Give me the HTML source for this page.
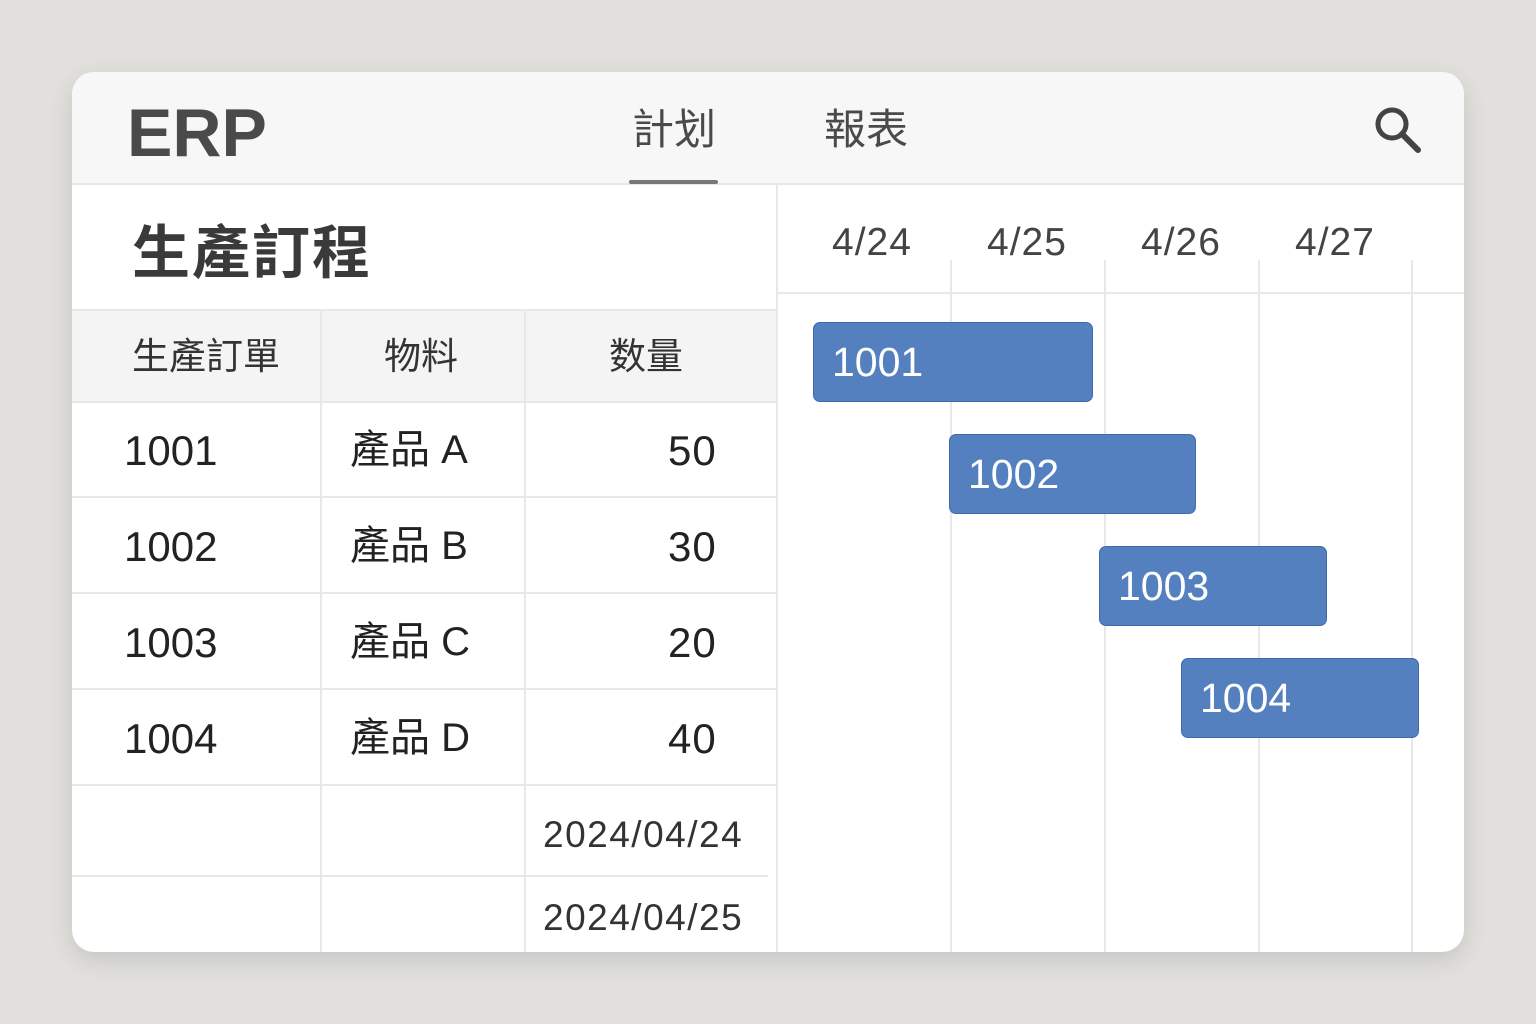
<!DOCTYPE html>
<html><head><meta charset="utf-8"><style>
*{margin:0;padding:0;box-sizing:border-box}
body{width:1536px;height:1024px;background:#e1e0dd;position:relative;overflow:hidden;font-family:"Liberation Sans","Noto Sans CJK TC",sans-serif;color:#222}
.card{position:absolute;left:72px;top:72px;width:1392px;height:880px;background:#fff;border-radius:22px;overflow:hidden;box-shadow:0 8px 24px rgba(0,0,0,.12)}
.a{position:absolute}
.hl{position:absolute;background:#e8e8e8;height:2px}
.vl{position:absolute;background:#e8e8e8;width:2px}
.t{position:absolute;white-space:nowrap;line-height:1}
.bar{position:absolute;background:#5580bf;border-radius:7px;border:1px solid #3f6aab;color:#fff;font-size:41px;padding-left:18px;display:flex;align-items:center}
.d{font-size:39px;color:#444;letter-spacing:1px}
</style></head><body>
<div class="card">
<div class="a" style="left:0;top:0;width:1392px;height:113px;background:#f7f7f7;border-bottom:2px solid #e8e8e8"></div>
<div class="t" style="left:55px;top:27px;font-size:68px;font-weight:bold;color:#4a4a4a">ERP</div>
<div class="t" style="left:560px;top:37px;font-size:42px;color:#4a4a4a">計划</div>
<div class="a" style="left:557px;top:108px;width:89px;height:4px;background:#777;border-radius:2px"></div>
<div class="t" style="left:752px;top:37px;font-size:42px;color:#4a4a4a">報表</div>
<svg class="a" style="left:1298px;top:30px" width="54" height="54" viewBox="0 0 54 54"><circle cx="22" cy="22" r="14" fill="none" stroke="#444" stroke-width="5"/><line x1="32" y1="32" x2="48" y2="48" stroke="#444" stroke-width="6" stroke-linecap="round"/></svg>
<div class="vl" style="left:704px;top:113px;height:767px"></div>
<div class="t" style="left:60px;top:153px;font-size:58px;font-weight:bold;color:#3a3a3a;letter-spacing:2px">生產訂程</div>
<div class="a" style="left:0;top:238px;width:704px;height:92px;background:#f4f4f4"></div>
<div class="hl" style="left:0;top:237px;width:704px"></div>
<div class="hl" style="left:0;top:329px;width:704px"></div>
<div class="hl" style="left:0;top:424px;width:704px"></div>
<div class="hl" style="left:0;top:520px;width:704px"></div>
<div class="hl" style="left:0;top:616px;width:704px"></div>
<div class="hl" style="left:0;top:712px;width:704px"></div>
<div class="hl" style="left:0;top:803px;width:696px"></div>
<div class="vl" style="left:248px;top:238px;height:642px"></div>
<div class="vl" style="left:452px;top:238px;height:642px"></div>
<div class="t" style="left:60px;top:266px;font-size:37px;color:#333">生產訂單</div>
<div class="t" style="left:312px;top:266px;font-size:37px;color:#333">物料</div>
<div class="t" style="left:537px;top:266px;font-size:37px;color:#333">数量</div>
<div class="t" style="left:52px;top:358px;font-size:42px">1001</div>
<div class="t" style="left:278px;top:358px;font-size:40px">產品 A</div>
<div class="t" style="left:596px;top:358px;font-size:42px;letter-spacing:1px">50</div>
<div class="t" style="left:52px;top:454px;font-size:42px">1002</div>
<div class="t" style="left:278px;top:454px;font-size:40px">產品 B</div>
<div class="t" style="left:596px;top:454px;font-size:42px;letter-spacing:1px">30</div>
<div class="t" style="left:52px;top:550px;font-size:42px">1003</div>
<div class="t" style="left:278px;top:550px;font-size:40px">產品 C</div>
<div class="t" style="left:596px;top:550px;font-size:42px;letter-spacing:1px">20</div>
<div class="t" style="left:52px;top:646px;font-size:42px">1004</div>
<div class="t" style="left:278px;top:646px;font-size:40px">產品 D</div>
<div class="t" style="left:596px;top:646px;font-size:42px;letter-spacing:1px">40</div>
<div class="t" style="left:471px;top:744px;font-size:37px;color:#333;letter-spacing:1.5px">2024/04/24</div>
<div class="t" style="left:471px;top:827px;font-size:37px;color:#333;letter-spacing:1.5px">2024/04/25</div>
<div class="t d" style="left:760px;top:151px">4/24</div>
<div class="t d" style="left:915px;top:151px">4/25</div>
<div class="t d" style="left:1069px;top:151px">4/26</div>
<div class="t d" style="left:1223px;top:151px">4/27</div>
<div class="hl" style="left:706px;top:220px;width:686px"></div>
<div class="vl" style="left:878px;top:188px;height:692px"></div>
<div class="vl" style="left:1032px;top:188px;height:692px"></div>
<div class="vl" style="left:1186px;top:188px;height:692px"></div>
<div class="vl" style="left:1339px;top:188px;height:692px"></div>
<div class="bar" style="left:741px;top:250px;width:280px;height:80px">1001</div>
<div class="bar" style="left:877px;top:362px;width:247px;height:80px">1002</div>
<div class="bar" style="left:1027px;top:474px;width:228px;height:80px">1003</div>
<div class="bar" style="left:1109px;top:586px;width:238px;height:80px">1004</div>
</div>
</body></html>
